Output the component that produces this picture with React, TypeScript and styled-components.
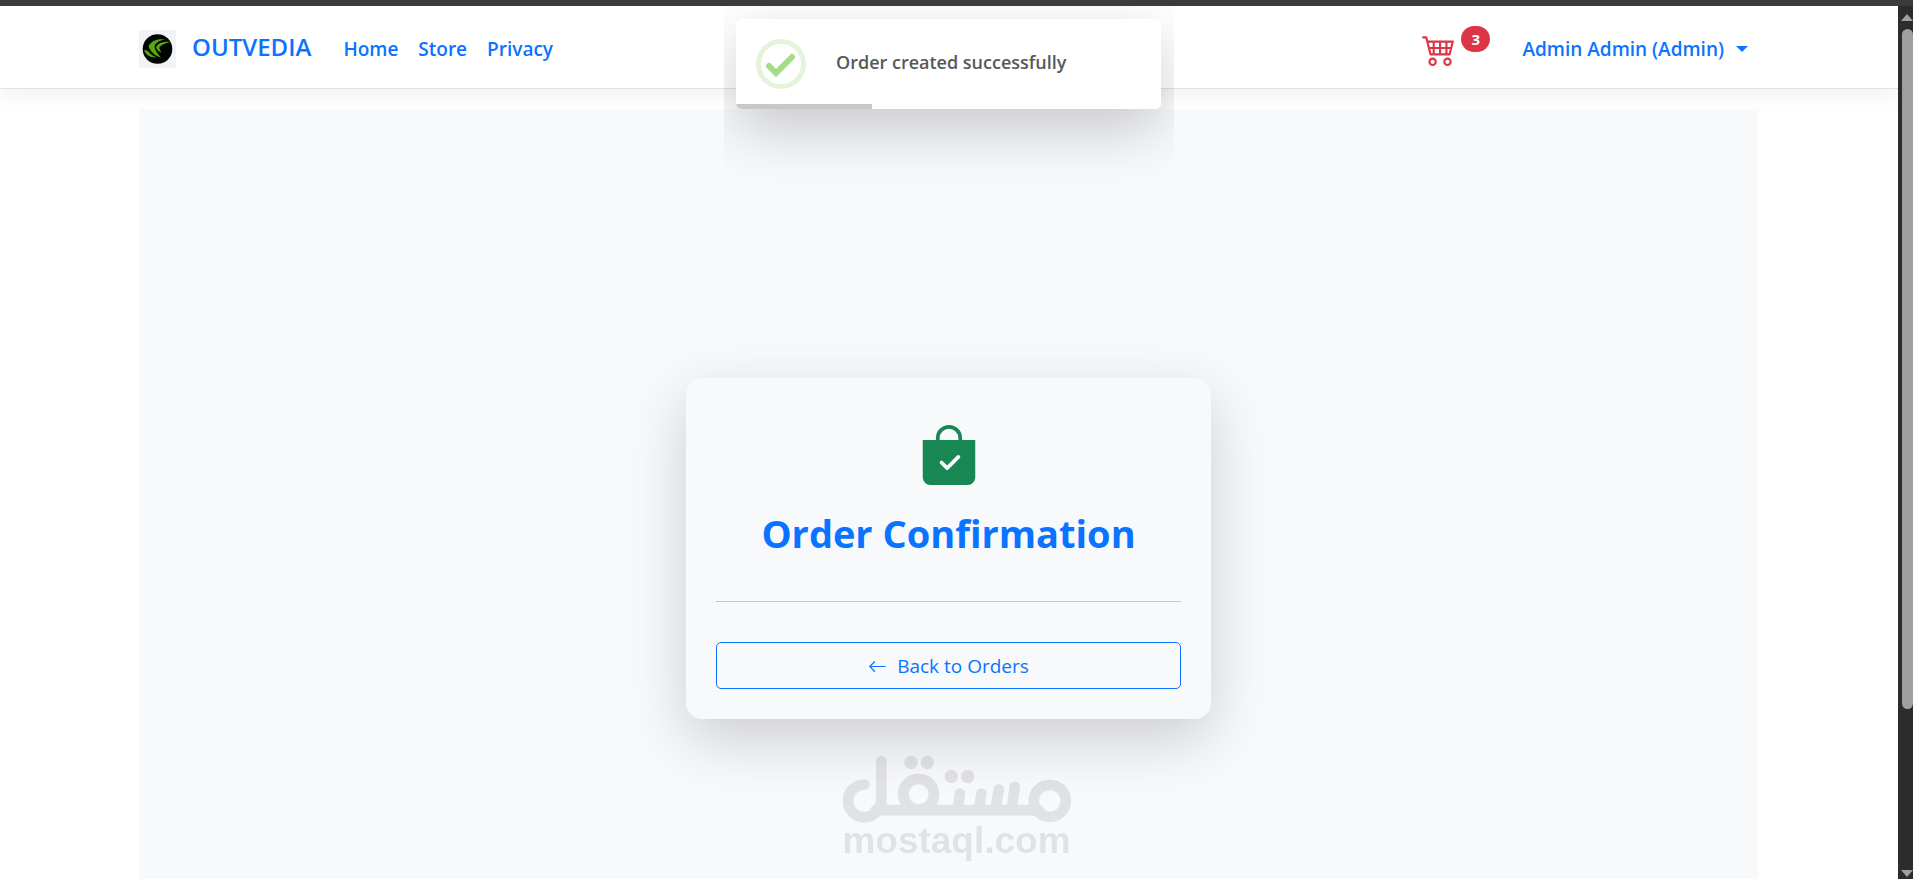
import React from "react";
import styled, { createGlobalStyle } from "styled-components";
import { BsArrowLeft, BsBagCheckFill, BsCart4 } from "react-icons/bs";

const blue = "#0a73ff";
const red = "#dc3545";
const green = "#198754";
const surface = "#f8f9fb";

const GlobalStyle = createGlobalStyle`
  *, *::before, *::after { box-sizing: border-box; }
  body {
    margin: 0;
    background: #fff;
    color: #212529;
    font-family: "Segoe UI", "Open Sans", "Noto Sans", sans-serif;
    font-size: 19px;
    line-height: 30px;
  }
`;

const Shell = styled.div`
  display: grid;
  grid-template-columns: minmax(0, 1fr) 15px;
  grid-template-rows: 6px minmax(0, 1fr);
  height: 100vh;
`;

const WindowEdge = styled.div`
  grid-column: 1 / -1;
  background: #3b3b3b;
`;

const Viewport = styled.div`
  position: relative;
  overflow-x: hidden;
  overflow-y: auto;
  scrollbar-width: none;
`;

const Header = styled.header`
  border-bottom: 1px solid #dee2e6;
  box-shadow: 0 8px 20px rgba(0, 0, 0, 0.05);
`;

const Container = styled.div`
  max-width: 1650px;
  margin: 0 auto;
  padding: 0 16px 0 15px;
`;

const Bar = styled(Container)`
  display: flex;
  align-items: center;
  min-height: 82px;
  padding-top: 3px;
`;

const Brand = styled.a`
  display: flex;
  align-items: center;
  gap: 16px;
  margin-right: 32px;
  color: ${blue};
  font-size: 24px;
  font-weight: 600;
  text-decoration: none;

  span { padding-bottom: 4px; }
`;

const Nav = styled.nav`
  display: flex;
  gap: 20px;
`;

const NavLink = styled.a`
  color: ${blue};
  font-weight: 600;
  text-decoration: none;
`;

const Account = styled.div`
  display: flex;
  align-items: center;
  margin-left: auto;
  padding-right: 10px;
  gap: 66px;
`;

const CartLink = styled.a`
  position: relative;
  display: flex;
  color: ${red};
  font-size: 34px;
`;

const CartBadge = styled.span`
  position: absolute;
  top: -6px;
  left: 39px;
  padding: 5px 10px;
  border-radius: 16px;
  background: ${red};
  color: #fff;
  font-size: 15px;
  font-weight: 700;
  line-height: 16px;
`;

const AccountButton = styled.button`
  display: flex;
  align-items: center;
  gap: 12px;
  padding: 0;
  border: 0;
  background: none;
  color: ${blue};
  font: inherit;
  font-weight: 600;

  &::after {
    content: "";
    border: 6px solid transparent;
    border-top-color: ${blue};
    border-bottom: 0;
  }
`;

const Section = styled.section`
  display: flex;
  align-items: center;
  justify-content: center;
  min-height: 100vh;
  margin-top: 20px;
  background: ${surface};
`;

const Card = styled.article`
  width: 100%;
  max-width: 525px;
  padding: 47px 30px 30px;
  border-radius: 16px;
  background: ${surface};
  box-shadow: 0 20px 60px rgba(0, 0, 0, 0.175);
  text-align: center;

  > svg {
    display: block;
    margin: 0 auto;
    color: ${green};
    font-size: 60px;
  }
`;

const Title = styled.h1`
  margin: 24px 0 44px;
  color: ${blue};
  font-size: 38px;
  font-weight: 700;
  line-height: 48px;
`;

const Divider = styled.hr`
  margin: 0 0 40px;
  border: 0;
  border-top: 1px solid #c4c6c8;
`;

const BackLink = styled.a`
  display: flex;
  align-items: center;
  justify-content: center;
  gap: 10px;
  padding: 8px 15px 7px;
  border: 1px solid ${blue};
  border-radius: 5px;
  color: ${blue};
  text-decoration: none;
`;

const ToastLayer = styled.div`
  position: absolute;
  top: 0;
  left: 50%;
  width: 450px;
  padding: 13px 13px 90px 12px;
  overflow: hidden;
  transform: translateX(-50%);
  pointer-events: none;
`;

const ToastShadow = styled.div`
  border-radius: 6px;
  box-shadow: 0 20px 60px rgba(0, 0, 0, 0.2);
`;

const Toast = styled.div`
  position: relative;
  display: flex;
  align-items: center;
  gap: 30px;
  height: 90px;
  padding: 0 20px;
  border-radius: 6px;
  overflow: hidden;
  background: #fff;
  color: #545a5c;
  font-size: 18px;
  font-weight: 600;
`;

const ToastText = styled.p`
  margin: 0;
  padding-bottom: 4px;
`;

const ToastIcon = styled.svg`
  width: 50px;
  height: 50px;
  fill: none;
`;

const ToastProgress = styled.div`
  position: absolute;
  bottom: 0;
  left: 0;
  width: 32%;
  height: 5px;
  background: #c8c8c8;
`;

const ScrollColumn = styled.div`
  display: flex;
  flex-direction: column;
  align-items: flex-end;
  padding: 8px 0 2px;
  background: #2c2c2b;
`;

const ScrollArrow = styled.svg`
  width: 12px;
  height: 7px;
  fill: #9f9f9f;
`;

const ScrollTrack = styled.div`
  flex: 1;
  width: 11px;
  margin: 8px 0;
`;

const ScrollThumb = styled.div`
  height: 81.6%;
  border-radius: 6px;
  background: #9f9f9f;
`;

const Watermark = styled.div`
  position: fixed;
  bottom: 20px;
  left: 50%;
  display: flex;
  flex-direction: column;
  align-items: center;
  transform: translateX(-50%);
  opacity: 0.09;
  color: #000;
  font-family: "Liberation Sans", Arial, sans-serif;
  font-size: 37px;
  font-weight: 700;
  line-height: 36px;
  pointer-events: none;

  svg { width: 229px; height: 68px; }
`;

function BrandMark() {
  return (
    <svg width="37" height="38" viewBox="0 0 37 38" aria-hidden="true">
      <rect width="37" height="38" fill="#f1f3f4" />
      <circle cx="18.5" cy="19" r="14.8" fill="#020402" />
      <g fill="#57a80b">
        <path d="M9.500 16C12.500 10.500 18 8.800 26 9.200c-5 1.500-9.500 3-10.500 7.300.5 4 3.500 7.500 6.500 11.200C15.500 25.500 11 21.500 9.500 16Z" />
        <path d="M17 17.500c2-4.500 7-6 14.500-5.600-5 1.300-9.500 2.800-11.200 5.800.4 2 1.200 3.300 2.400 5-2.900-1-4.700-2.700-5.700-5.200Z" />
        <path d="M5 20.300c2-.2 3.800.3 4.800 1.600 2 2.800 4.500 4.200 8.500 5.400-6 .6-11-1.400-13.300-7Z" />
      </g>
    </svg>
  );
}

function WatermarkLogo() {
  return (
    <svg viewBox="66 47 686 203" role="img" aria-label="مستقل">
      <g fill="none" stroke="#000" strokeWidth="32" strokeLinecap="round">
        <path d="M131 135A49 49 0 1 0 180 190" />
        <path d="M182 65V195" />
        <path d="M165 212H655" />
        <circle cx="294" cy="164" r="46" />
        <path d="M418 162L412 208M482 162L475 208M534 150L525 208M582 142L573 208" />
        <circle cx="687" cy="184" r="48" />
      </g>
      <circle cx="271" cy="69" r="20" />
      <circle cx="320" cy="69" r="20" />
      <circle cx="392" cy="111" r="20" />
      <circle cx="441" cy="111" r="20" />
    </svg>
  );
}

export default function App() {
  return (
    <Shell>
      <GlobalStyle />
      <WindowEdge />
      <Viewport>
        <Header>
          <Bar>
            <Brand href="#">
              <BrandMark />
              <span>OUTVEDIA</span>
            </Brand>
            <Nav>
              <NavLink href="#">Home</NavLink>
              <NavLink href="#">Store</NavLink>
              <NavLink href="#">Privacy</NavLink>
            </Nav>
            <Account>
              <CartLink href="#" aria-label="Cart, 3 items">
                <BsCart4 />
                <CartBadge>3</CartBadge>
              </CartLink>
              <AccountButton type="button">Admin Admin (Admin)</AccountButton>
            </Account>
          </Bar>
        </Header>
        <Container as="main">
          <Section>
            <Card>
              <BsBagCheckFill />
              <Title>Order Confirmation</Title>
              <Divider />
              <BackLink href="#">
                <BsArrowLeft />
                Back to Orders
              </BackLink>
            </Card>
          </Section>
        </Container>
        <ToastLayer>
          <ToastShadow>
            <Toast role="status">
              <ToastIcon viewBox="0 0 50 50" aria-hidden="true">
                <circle cx="25" cy="25" r="22.5" stroke="#e4f4da" strokeWidth="5" />
                <path d="M13 27L20 34L36 18" stroke="#a5dc86" strokeWidth="6" strokeLinecap="round" />
              </ToastIcon>
              <ToastText>Order created successfully</ToastText>
              <ToastProgress />
            </Toast>
          </ToastShadow>
        </ToastLayer>
      </Viewport>
      <ScrollColumn aria-hidden="true">
        <ScrollArrow viewBox="0 0 12 7"><path d="M0 7L6 0L12 7Z" /></ScrollArrow>
        <ScrollTrack><ScrollThumb /></ScrollTrack>
        <ScrollArrow viewBox="0 0 12 7"><path d="M0 0L6 7L12 0Z" /></ScrollArrow>
      </ScrollColumn>
      <Watermark>
        <WatermarkLogo />
        <span>mostaql.com</span>
      </Watermark>
    </Shell>
  );
}
